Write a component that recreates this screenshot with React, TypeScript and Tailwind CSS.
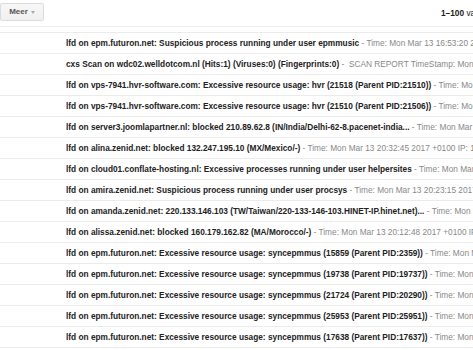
import React from "react";

const rows: [string, string][] = [
  ["lfd on epm.futuron.net: Suspicious process running under user epmmusic", " - Time: Mon Mar 13 16:53:20 2017 +0100"],
  ["cxs Scan on wdc02.welldotcom.nl (Hits:1) (Viruses:0) (Fingerprints:0)", " -  SCAN REPORT TimeStamp: Mon, 13 Mar 2017"],
  ["lfd on vps-7941.hvr-software.com: Excessive resource usage: hvr (21518 (Parent PID:21510))", " - Time: Mon Mar 13"],
  ["lfd on vps-7941.hvr-software.com: Excessive resource usage: hvr (21510 (Parent PID:21506))", " - Time: Mon Mar 13"],
  ["lfd on server3.joomlapartner.nl: blocked 210.89.62.8 (IN/India/Delhi-62-8.pacenet-india...", " - Time: Mon Mar 13"],
  ["lfd on alina.zenid.net: blocked 132.247.195.10 (MX/Mexico/-)", " - Time: Mon Mar 13 20:32:45 2017 +0100 IP: 132"],
  ["lfd on cloud01.conflate-hosting.nl: Excessive processes running under user helpersites", " - Time: Mon Mar 13"],
  ["lfd on amira.zenid.net: Suspicious process running under user procsys", " - Time: Mon Mar 13 20:23:15 2017 +0100"],
  ["lfd on amanda.zenid.net: 220.133.146.103 (TW/Taiwan/220-133-146-103.HINET-IP.hinet.net)...", " - Time: Mon Mar 13"],
  ["lfd on alissa.zenid.net: blocked 160.179.162.82 (MA/Morocco/-)", " - Time: Mon Mar 13 20:12:48 2017 +0100 IP: 160"],
  ["lfd on epm.futuron.net: Excessive resource usage: syncepmmus (15859 (Parent PID:2359))", " - Time: Mon Mar 13"],
  ["lfd on epm.futuron.net: Excessive resource usage: syncepmmus (19738 (Parent PID:19737))", " - Time: Mon Mar 13"],
  ["lfd on epm.futuron.net: Excessive resource usage: syncepmmus (21724 (Parent PID:20290))", " - Time: Mon Mar 13"],
  ["lfd on epm.futuron.net: Excessive resource usage: syncepmmus (25953 (Parent PID:25951))", " - Time: Mon Mar 13"],
  ["lfd on epm.futuron.net: Excessive resource usage: syncepmmus (17638 (Parent PID:17637))", " - Time: Mon Mar 13"],
];

export default function App() {
  return (
    <div
      className="w-[473px] h-[350px] overflow-hidden bg-white"
      style={{ fontFamily: '"Liberation Sans", Arial, sans-serif' }}
    >
      <div className="h-[27px] flex items-start justify-between border-b border-[#ededed] overflow-hidden">
        <div className="mt-[3px] h-[18px] w-[44px] shrink-0 flex items-center justify-center gap-[3px] rounded-[2px] border border-[#dcdcdc] bg-gradient-to-b from-[#f7f7f7] to-[#f0f0f0] text-[8px] font-bold text-[#555]">
          <span>Meer</span>
          <span className="block w-0 h-0 border-l-[2px] border-r-[2px] border-t-[3px] border-l-transparent border-r-transparent border-t-[#aaa] mt-[1px]"></span>
        </div>
        <div className="mt-[7px] shrink-0 w-[32px] overflow-hidden text-[8.3px] whitespace-nowrap text-[#222]">
          <span className="font-bold">1–100</span> <span>van</span>
        </div>
      </div>
      <div className="mt-[5px] border-t border-[#ebebeb]">
        {rows.map(([a, b], i) => (
          <div
            key={i}
            className="h-[21px] border-b border-[#ebebeb] flex items-center pl-[66px] whitespace-nowrap overflow-hidden text-[8.3px]"
          >
            <span className="font-bold text-[#222]">{a}</span>
            <span className="text-[#888] whitespace-pre">{b}</span>
          </div>
        ))}
      </div>
    </div>
  );
}
